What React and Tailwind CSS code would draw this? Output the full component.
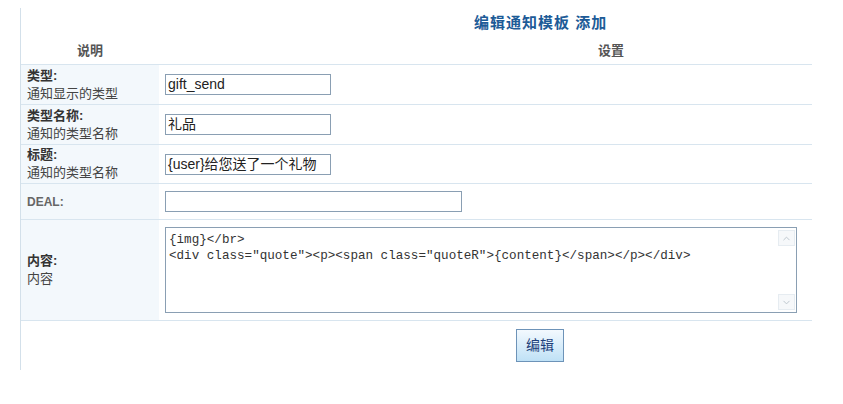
import React from "react";
import { ChevronUp, ChevronDown } from "lucide-react";

const font = { fontFamily: '"Liberation Sans", "Noto Sans CJK SC", sans-serif' };

function Label({ title, sub }) {
  return (
    <div className="w-[138px] shrink-0 self-stretch bg-[#f3f8fc] pl-[6px] flex flex-col justify-center text-[13px] leading-[18px]">
      <div className="font-bold text-[#333]">{title}</div>
      {sub && <div className="text-[#444]">{sub}</div>}
    </div>
  );
}

function Input({ value, w = "w-[166px]" }) {
  return (
    <div className={`${w} h-[21px] border border-[#8a9fb3] bg-white flex items-center pl-[2px] text-[14px] text-[#222]`}>
      {value}
    </div>
  );
}

export default function App() {
  return (
    <div className="w-[843px] h-[404px] bg-white pt-[8px]" style={font}>
      <div className="ml-[20px] w-[792px] h-[362px] border-l border-[#d3e0ea]">
        {/* title + header */}
        <div className="h-[57px] border-b border-[#d8e5ef] flex flex-col">
          <div className="h-[30px] flex items-center pl-[453px] text-[15px] font-bold text-[#1d5b97] tracking-[1px]">
            编辑通知模板 添加
          </div>
          <div className="flex-1 flex items-center text-[13px] font-bold text-[#555]">
            <div className="w-[138px] text-center">说明</div>
            <div className="pl-[439px]">设置</div>
          </div>
        </div>

        <div className="h-[40px] border-b border-[#d8e5ef] flex items-center">
          <Label title="类型:" sub="通知显示的类型" />
          <div className="pl-[6px]"><Input value="gift_send" /></div>
        </div>
        <div className="h-[40px] border-b border-[#d8e5ef] flex items-center">
          <Label title="类型名称:" sub="通知的类型名称" />
          <div className="pl-[6px]"><Input value="礼品" /></div>
        </div>
        <div className="h-[39px] border-b border-[#d8e5ef] flex items-center">
          <Label title="标题:" sub="通知的类型名称" />
          <div className="pl-[6px]"><Input value="{user}给您送了一个礼物" /></div>
        </div>
        <div className="h-[36px] border-b border-[#d8e5ef] flex items-center">
          <div className="w-[138px] shrink-0 self-stretch bg-[#f3f8fc] pl-[6px] flex items-center text-[12px] font-bold text-[#666]">
            DEAL:
          </div>
          <div className="pl-[6px]"><Input value="" w="w-[297px]" /></div>
        </div>
        <div className="h-[101px] border-b border-[#d8e5ef] flex items-center">
          <Label title="内容:" sub="内容" />
          <div className="pl-[6px]">
            <div className="w-[632px] h-[86px] border border-[#8a9fb3] bg-white flex">
              <div
                className="flex-1 pl-[3px] pt-[4px] text-[12.6px] leading-[16px] text-[#333] whitespace-pre"
                style={{ fontFamily: '"Liberation Mono", monospace' }}
              >
                {'{img}</br>\n<div class="quote"><p><span class="quoteR">{content}</span></p></div>'}
              </div>
              <div className="w-[18px] flex flex-col justify-between py-[2px] pr-[1px]">
                <div className="h-[16px] border border-[#e6ecf1] bg-[#f6f8fa] flex items-center justify-center">
                  <ChevronUp size={11} strokeWidth={2} color="#b9c3cb" />
                </div>
                <div className="h-[16px] border border-[#e6ecf1] bg-[#f6f8fa] flex items-center justify-center">
                  <ChevronDown size={11} strokeWidth={2} color="#b9c3cb" />
                </div>
              </div>
            </div>
          </div>
        </div>
        <div className="h-[48px] flex items-center pl-[495px]">
          <div className="w-[48px] h-[33px] border border-[#6d93b8] bg-gradient-to-b from-[#f3f9fe] to-[#bfe1f6] flex items-center justify-center text-[14px] text-[#1e3f7a]">
            编辑
          </div>
        </div>
      </div>
    </div>
  );
}
